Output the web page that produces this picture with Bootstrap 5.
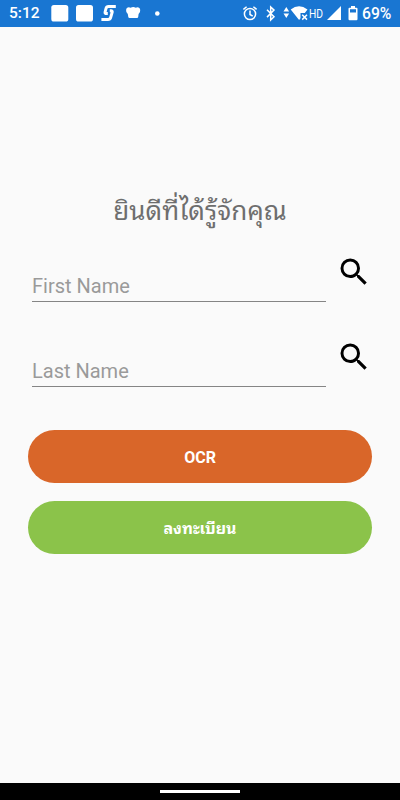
<!DOCTYPE html>
<html lang="th">
<head>
<meta charset="utf-8">
<meta name="viewport" content="width=device-width, initial-scale=1">
<title>Register</title>
<link href="https://cdn.jsdelivr.net/npm/bootstrap@5.3.0/dist/css/bootstrap.min.css" rel="stylesheet">
<style>
body{font-family:Roboto,"Noto Sans Thai Looped","Noto Sans Thai","Noto Sans",sans-serif;background:#fafafa;height:800px;overflow:hidden}
.status-bar{height:26.5px;background:#1976d2;color:#fff;font-size:16px;font-weight:500;line-height:27px}
.status-bar svg{display:block;flex:none}
.clock{box-sizing:content-box;padding:1px 0 0 9px;width:33px;margin-right:9px;font-size:15.5px}
.pct{width:29px;margin-right:9px;white-space:nowrap;font-size:15.7px;padding-top:1px}
.welcome{font-size:26px;line-height:40px;color:#6e6e6e;margin:164px 0 0;white-space:nowrap}
.register-form{margin-top:31px}
.field-row{height:85px;padding:0 27px 0 32px}
.line-input{width:293.5px;height:40px;border:0;border-bottom:1px solid #858585;border-radius:0;background:transparent!important;padding:9px 0 0;font-size:20px;color:#222}
.line-input::placeholder{color:#9a9a9a;opacity:1}
.search-btn{width:36px;height:36px;margin:-8px 0 0 10.5px}
.actions{padding:0 28px;gap:18px;margin-top:-1.5px}
.action{height:53px;font-size:16px;font-weight:700;color:#fff;border:0;padding:2px 0 0}
.action-ocr,.action-ocr:hover{background:#d96629;color:#fff}
.action-reg,.action-reg:hover{background:#8bc34a;color:#fff}
.nav-strip{height:17.5px;background:#000}
.nav-pill{width:80px;height:3px;background:#fff;margin-top:1px}
</style>
<script src="https://cdn.jsdelivr.net/npm/bootstrap@5.3.0/dist/js/bootstrap.bundle.min.js"></script>
</head>
<body class="d-flex flex-column">
<header class="status-bar d-flex align-items-center justify-content-between">
  <div class="d-flex align-items-center">
    <span class="clock">5:12</span>
    <svg width="112" height="26" viewBox="51 0 112 26" fill="#fff">
      <rect x="51.3" y="5" width="17" height="16.5" rx="2.6"/>
      <rect x="76" y="5" width="17" height="16.5" rx="2.6"/>
      <path d="M115.800 6.500h-7.300q-2 0-2.500 2l-.9 3.500q-.4 1.600 1.500 1.600h1.200M101.400 19.500h6.500q2.200 0 2.800-2.100l1.500-5.200q.3-1.500-1.200-1.500h-1.200" fill="none" stroke="#fff" stroke-width="3"/>
      <path d="M127.800 14q-2-1.500-1.700-4 .3-2.700 2.800-2.700 1 0 1.700.4 1.300-.6 2.600-.6t2.600.6q.7-.4 1.600-.4 2.500 0 2.800 2.700.3 2.500-1.600 4l-.4 2.900q-.2 1-1.200 1h-7.500q-1 0-1.200-1z"/>
      <circle cx="157.300" cy="13.500" r="2.300"/>
    </svg>
  </div>
  <div class="d-flex align-items-center">
    <svg width="119" height="26" viewBox="243 0 119 26" fill="#fff">
      <g fill="none" stroke="#fff" stroke-width="1.500">
        <circle cx="250" cy="14" r="5.600"/><path d="M250 10.500v4l2.700 1.700M243.400 9.400l3.200-2.700M256.600 9.400l-3.200-2.700"/>
        <path d="M267 9.800l7 7-3.300 3.200V7l3.300 3.100-7 7"/>
      </g>
      <path d="M283.500 11.500l2.800-4.500 2.800 4.500zM283.500 13.500h5.600l-2.800 4.500z"/>
      <path d="M290.700 9.500q8.300-6.500 16.800 0l-2.700 3.500h-4.300v5.300l-1.400 1.700z"/>
      <path d="M302.200 14.800l4.800 4.800M307 14.800l-4.800 4.800" stroke="#fff" stroke-width="1.500"/>
      <text x="309" y="18" font-size="12.800" font-weight="400" textLength="14" lengthAdjust="spacingAndGlyphs">HD</text>
      <path d="M327 20L341 6v14z"/>
      <path fill-rule="evenodd" d="M351 6h4v1.700h1.500q1 0 1 1V19q0 1.200-1 1.200h-7q-1 0-1-1.200V8.700q0-1 1-1h1.500zM350 9.200v3.300h6V9.200z"/>
    </svg>
    <span class="pct">69%</span>
  </div>
</header>
<main class="flex-grow-1 d-flex flex-column">
  <h1 class="welcome text-center fw-normal">ยินดีที่ได้รู้จักคุณ</h1>
  <form class="register-form d-flex flex-column">
    <div class="field-row d-flex">
      <input class="form-control line-input shadow-none" type="text" placeholder="First Name" aria-label="First Name">
      <button class="btn p-0 border-0 search-btn flex-shrink-0" type="button" aria-label="Search first name">
        <svg class="d-block" width="36" height="36" viewBox="0 0 24 24"><path d="M15.500 14h-.79l-.28-.27A6.470 6.470 0 0 0 16 9.500 6.500 6.500 0 1 0 9.500 16c1.610 0 3.090-.59 4.230-1.570l.27.28v.79l5 4.990L20.490 19l-4.990-5zm-6 0C7.010 14 5 11.990 5 9.500S7.010 5 9.500 5 14 7.010 14 9.500 11.990 14 9.500 14z"/></svg>
      </button>
    </div>
    <div class="field-row d-flex">
      <input class="form-control line-input shadow-none" type="text" placeholder="Last Name" aria-label="Last Name">
      <button class="btn p-0 border-0 search-btn flex-shrink-0" type="button" aria-label="Search last name">
        <svg class="d-block" width="36" height="36" viewBox="0 0 24 24"><path d="M15.500 14h-.79l-.28-.27A6.470 6.470 0 0 0 16 9.500 6.500 6.500 0 1 0 9.500 16c1.610 0 3.090-.59 4.230-1.570l.27.28v.79l5 4.990L20.490 19l-4.990-5zm-6 0C7.010 14 5 11.990 5 9.500S7.010 5 9.500 5 14 7.010 14 9.500 11.990 14 9.500 14z"/></svg>
      </button>
    </div>
    <div class="actions d-flex flex-column">
      <button class="btn action action-ocr rounded-pill" type="button">OCR</button>
      <button class="btn action action-reg rounded-pill" type="button">ลงทะเบียน</button>
    </div>
  </form>
</main>
<footer class="nav-strip d-flex align-items-center justify-content-center"><div class="nav-pill"></div></footer>
</body>
</html>
